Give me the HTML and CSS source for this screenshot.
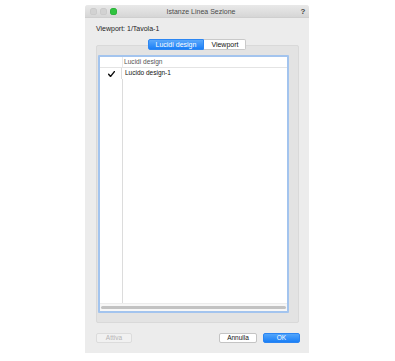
FILE: index.html
```html
<!DOCTYPE html>
<html lang="it">

<head>
    <meta charset="UTF-8">
    <meta name="viewport" content="width=device-width, initial-scale=1.0">
    <title>Istanze Linea Sezione</title>
    <link rel="stylesheet" href="styles.css">
</head>

<body>
    <div class="window">
        <div class="titlebar">
            <div class="lights">
                <span class="light"></span>
                <span class="light"></span>
                <span class="light green"></span>
            </div>
            <div class="title">Istanze Linea Sezione</div>
            <div class="help">?</div>
        </div>
        <div class="content">
            <p class="vp-label">Viewport: 1/Tavola-1</p>
            <div class="panel">
                <div class="tabs">
                    <span class="tab active">Lucidi design</span>
                    <span class="tab">Viewport</span>
                </div>
                <div class="list">
                    <div class="list-head">
                        <span class="col-check"></span>
                        <span class="col-name">Lucidi design</span>
                    </div>
                    <div class="list-body">
                        <div class="row">
                            <span class="col-check">
                                <svg width="7" height="6" viewBox="0 0 7 6">
                                    <path d="M0.6 3.2 L2.6 5.4 L6.4 0.6" fill="none" stroke="#111" stroke-width="1.5" stroke-linecap="round" stroke-linejoin="round"/>
                                </svg>
                            </span>
                            <span class="col-name">Lucido design-1</span>
                        </div>
                        <div class="filler">
                            <span class="col-check"></span>
                            <span class="col-name"></span>
                        </div>
                    </div>
                    <div class="hscroll">
                        <div class="thumb"></div>
                    </div>
                </div>
            </div>
            <div class="footer">
                <button class="btn disabled">Attiva</button>
                <div class="spacer"></div>
                <button class="btn">Annulla</button>
                <button class="btn primary">OK</button>
            </div>
        </div>
    </div>
</body>

</html>
```

FILE: styles.css
```css
body {
    margin: 0;
    background-color: #fff;
    font-family: 'Liberation Sans', Arial, sans-serif;
    padding: 5px 0 0 85px;
}

.window {
    width: 224px;
    height: 348px;
    background-color: #ececec;
    border-radius: 3px 3px 0 0;
    display: flex;
    flex-direction: column;
    box-sizing: border-box;
}

.titlebar {
    height: 12px;
    background: linear-gradient(#e9e9e9, #d6d6d6);
    border-bottom: 1px solid #cfcfcf;
    border-radius: 3px 3px 0 0;
    display: flex;
    align-items: center;
}

.lights {
    display: flex;
    gap: 3px;
    padding-left: 5px;
}

.light {
    width: 7px;
    height: 7px;
    border-radius: 50%;
    background-color: #d2d2d2;
    box-shadow: inset 0 0 0 0.5px #c4c4c4;
}

.light.green {
    background-color: #2fc43f;
    box-shadow: inset 0 0 0 0.5px #23a532;
}

.title {
    flex: 1;
    text-align: center;
    font-size: 7px;
    color: #4a4a4a;
    margin-left: -14px;
}

.help {
    width: 8px;
    font-size: 8px;
    font-weight: bold;
    color: #444;
    margin-right: 2px;
    text-align: center;
}

.content {
    flex: 1;
    display: flex;
    flex-direction: column;
    padding: 0 10px 0 11px;
}

.vp-label {
    margin: 6px 0 0;
    height: 9px;
    line-height: 9px;
    font-size: 7px;
    color: #1c1c1c;
}

.panel {
    margin-top: 12px;
    background-color: #e3e3e3;
    border: 1px solid #d9d9d9;
    border-radius: 2px;
    padding: 0 9px 9px 1px;
}

.tabs {
    display: flex;
    justify-content: center;
    margin: -7px 0 0 7px;
    height: 11px;
}

.tab {
    font-size: 7px;
    line-height: 9px;
    padding: 0 7px;
    background-color: #fff;
    color: #111;
    border: 1px solid #c9c9c9;
    border-left: none;
    border-radius: 0 2px 2px 0;
}

.tab.active {
    background: linear-gradient(#5aa8fb, #1b7ff6);
    color: #fff;
    border: 1px solid #2c86f2;
    border-radius: 2px 0 0 2px;
    padding: 0 7px;
}

.list {
    margin-top: 5px;
    height: 258px;
    background-color: #fff;
    border: 2px solid #a3c4ee;
    border-radius: 1px;
    box-sizing: border-box;
    display: flex;
    flex-direction: column;
}

.list-head {
    display: flex;
    height: 10px;
    border-bottom: 1px solid #e4e4e4;
    font-size: 6.6px;
    color: #555;
    line-height: 10px;
}

.list-head .col-check {
    border-right: 1px solid #e9e9e9;
}

.list-head .col-name {
    padding-left: 1px;
}

.col-check {
    width: 22px;
    border-right: 1px solid #dcdcdc;
    display: flex;
    justify-content: center;
    align-items: center;
}

.col-name {
    flex: 1;
    padding-left: 3px;
}

.list-body {
    flex: 1;
    display: flex;
    flex-direction: column;
}

.row {
    display: flex;
    height: 11px;
    font-size: 6.5px;
    line-height: 10px;
    color: #111;
}

.row .col-check {
    padding-left: 2px;
    box-sizing: border-box;
}

.filler {
    flex: 1;
    display: flex;
}

.hscroll {
    height: 7px;
    background-color: #f7f7f7;
    border-top: 1px solid #ececec;
    display: flex;
    align-items: center;
    padding: 0 1px;
}

.thumb {
    flex: 1;
    height: 3px;
    border-radius: 2px;
    background-color: #c2c2c2;
}

.footer {
    display: flex;
    gap: 6px;
    margin: 10px -1px 0 0;
}

.spacer {
    flex: 1;
}

.btn {
    height: 10px;
    padding: 0;
    font-family: inherit;
    font-size: 6.5px;
    line-height: 8px;
    background-color: #fff;
    color: #111;
    border: 1px solid #c4c4c4;
    border-radius: 2px;
    width: 38px;
}

.btn.disabled {
    width: 36px;
    background-color: #f1f1f1;
    border-color: #dcdcdc;
    color: #b5b5b5;
}

.btn.primary {
    width: 37px;
    background: linear-gradient(#52a5fb, #1a7ff6);
    border-color: #2b85f2;
    color: #fff;
}
```
